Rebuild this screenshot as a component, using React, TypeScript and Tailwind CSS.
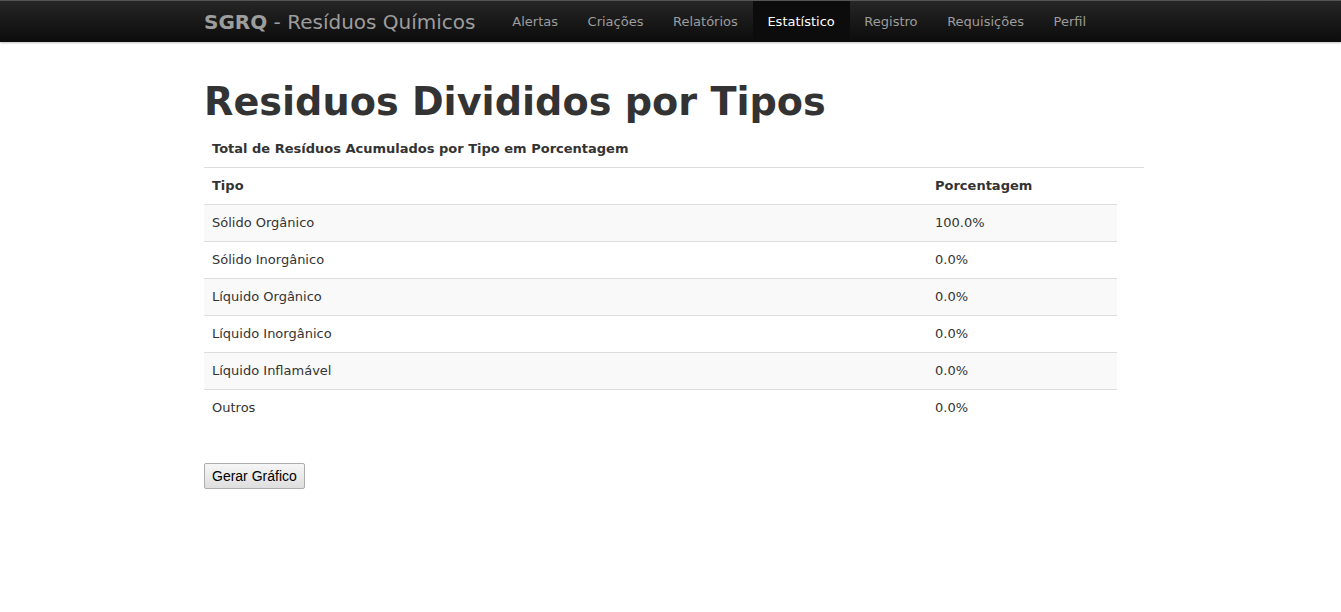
import React from "react";

const links = ["Alertas", "Criações", "Relatórios", "Estatístico", "Registro", "Requisições", "Perfil"];

const rows = [
  { tipo: "Sólido Orgânico", pct: "100.0%" },
  { tipo: "Sólido Inorgânico", pct: "0.0%" },
  { tipo: "Líquido Orgânico", pct: "0.0%" },
  { tipo: "Líquido Inorgânico", pct: "0.0%" },
  { tipo: "Líquido Inflamável", pct: "0.0%" },
  { tipo: "Outros", pct: "0.0%" },
];

export default function App() {
  return (
    <div className="min-h-[612px] bg-white text-[#333] font-['DejaVu_Sans',Verdana,sans-serif] text-[13px]">
      <nav className="h-[42px] border-t border-t-[#555] bg-gradient-to-b from-[#262626] to-[#0c0c0c] shadow-[0_1px_2px_rgba(0,0,0,0.25)]">
        <div className="ml-[204px] flex h-[41px] items-stretch">
          <a className="flex items-center pr-[22px] text-[20px] text-[#9d9d9d]">
            <span className="font-bold">SGRQ</span>
            <span>&nbsp;- Resíduos Químicos</span>
          </a>
          {links.map((l) => (
            <a
              key={l}
              className={`flex items-center px-[14.8px] ${
                l === "Estatístico" ? "bg-[#0c0c0c] text-white" : "text-[#9d9d9d]"
              }`}
            >
              {l}
            </a>
          ))}
        </div>
      </nav>

      <div className="ml-[204px] w-[940px]">
        <h1 className="mt-[39px] mb-[8px] text-[38.2px] leading-[1.1] font-bold">Residuos Divididos por Tipos</h1>

        <div className="border-b border-[#ddd] px-[8px] py-[8px] leading-[20px] font-bold">
          Total de Resíduos Acumulados por Tipo em Porcentagem
        </div>

        <table className="w-[913px] border-collapse">
          <thead>
            <tr className="border-b border-[#ddd]">
              <th className="w-[723px] p-[8px] text-left leading-[20px] font-bold">Tipo</th>
              <th className="p-[8px] text-left leading-[20px] font-bold">Porcentagem</th>
            </tr>
          </thead>
          <tbody>
            {rows.map((r, i) => (
              <tr
                key={r.tipo}
                className={`${i < rows.length - 1 ? "border-b border-[#ddd]" : ""} ${
                  i % 2 === 0 ? "bg-[#f9f9f9]" : ""
                }`}
              >
                <td className="p-[8px] leading-[20px]">{r.tipo}</td>
                <td className="p-[8px] leading-[20px]">{r.pct}</td>
              </tr>
            ))}
          </tbody>
        </table>

        <button className="mt-[37px] h-[26px] rounded-[2px] border border-[#adadad] bg-gradient-to-b from-[#f6f6f6] to-[#dedede] px-[7px] font-['Liberation_Sans',Arial,sans-serif] text-[14px] text-black">
          Gerar Gráfico
        </button>
      </div>
    </div>
  );
}
